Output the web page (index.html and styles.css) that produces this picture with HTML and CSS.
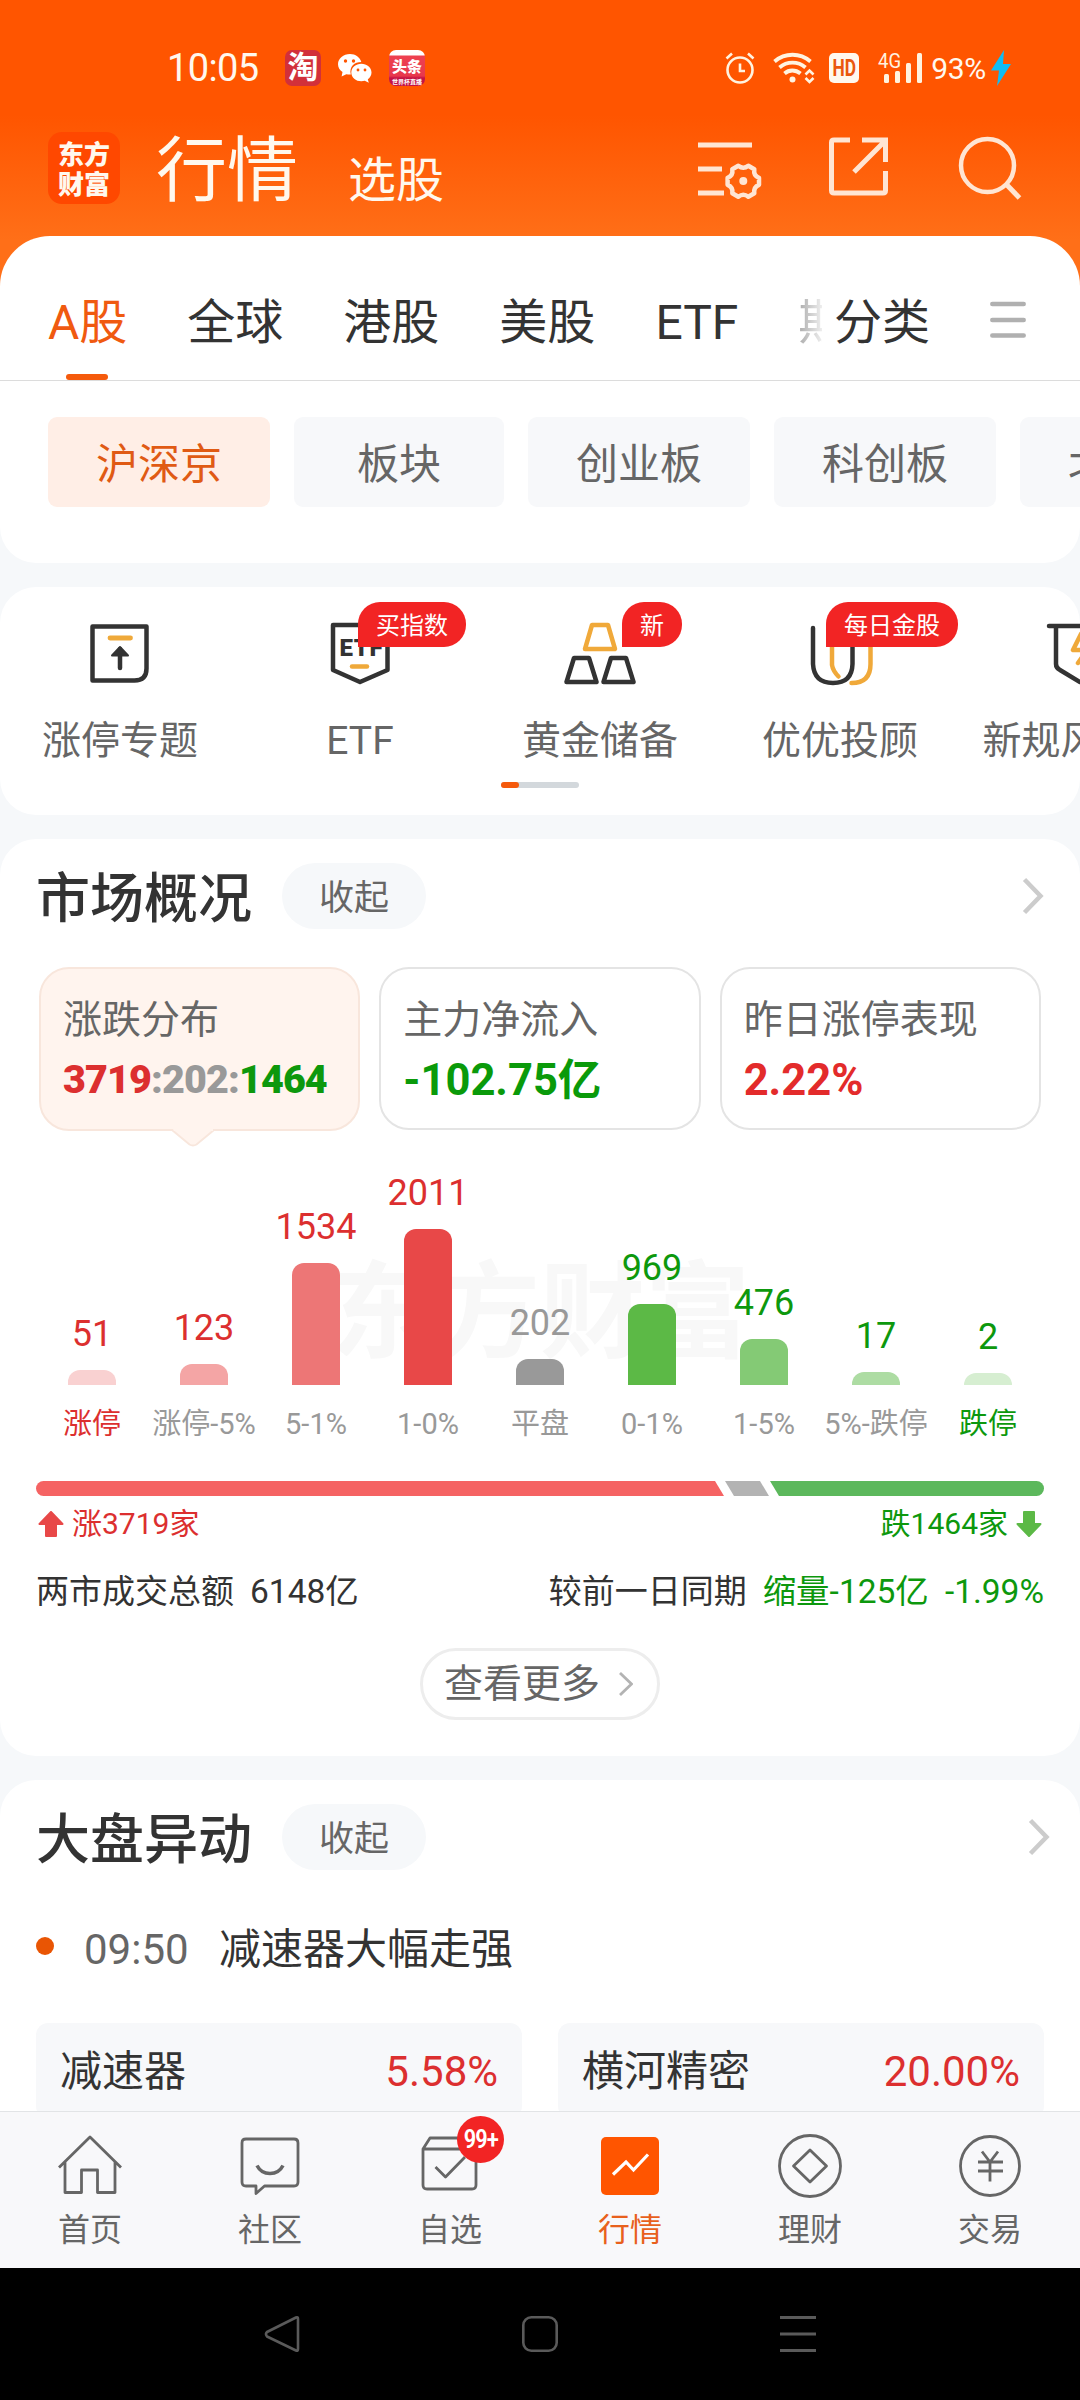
FILE: index.html
```html
<!DOCTYPE html>
<html lang="zh-CN">
<head>
  <meta charset="UTF-8">
  <title>行情</title>
  <meta name="viewport" content="width=device-width, initial-scale=1.0"/>
  <link rel="stylesheet" href="styles.css">
</head>
<body>
  <div class="app">
    <header class="header">
      <div class="status-bar">
        <span class="clock">10:05</span>
        <div class="status-apps">
          <span class="app-tao">淘</span>
          <svg class="app-wechat" width="34" height="30" viewBox="0 0 34 30">
            <path fill="#fff" d="M12 1C5.400 1 0 5.500 0 11.200c0 3.300 1.800 6 4.500 7.900L3.600 23.500l4.700-2.300c1.300.3 2.500.4 3.700.4h.8C11 13.500 16.500 9 23.300 9 22 4.300 17.500 1 12 1z"/>
            <path fill="#fff" d="M33.500 19.500c0-5-4.700-8.800-10.200-8.800s-10 3.800-10 8.800 4.500 8.800 10 8.800c1.200 0 2.400-.2 3.500-.5l4 2-1-3.500c2.300-1.700 3.700-4 3.700-6.800z"/>
            <g fill="#ff5500"><circle cx="7.500" cy="8" r="1.700"/><circle cx="15.500" cy="8" r="1.700"/><circle cx="20" cy="17" r="1.400"/><circle cx="27" cy="17" r="1.400"/></g>
          </svg>
          <span class="app-toutiao"><b>头条</b><i>世界杯直播</i></span>
        </div>
        <div class="status-right">
          <svg class="alarm" width="30" height="34" viewBox="0 0 30 34" fill="none" stroke="#fff3e0" stroke-width="2.600">
            <circle cx="15" cy="19" r="12.500"/><path d="M15 12.500v7.500h5M1.500 7.500l5.500-5M28.500 7.500L23 2.500" />
          </svg>
          <svg class="wifi" width="42" height="32" viewBox="0 0 42 32" fill="none" stroke="#fff3e0" stroke-width="3.800">
            <path d="M1.500 9.500C12 .5 27 .5 37.500 9.500M6.500 15.500c7.500-6.500 18.500-6.500 26 0M11.500 21.500c4.500-4 11-4 16 0"/>
            <circle cx="19.500" cy="27.500" r="3" fill="#fff3e0" stroke="none"/>
            <path stroke-width="2.600" d="M32.500 22.500l4-4 4 4M32.500 26l4 4 4-4"/>
          </svg>
          <svg class="hd" width="30" height="30" viewBox="0 0 30 30">
            <rect width="30" height="30" rx="5" fill="#fff8ee"/>
            <text x="3.500" y="23.300" textLength="23.500" lengthAdjust="spacingAndGlyphs">HD</text>
          </svg>
          <svg class="signal" width="46" height="32" viewBox="0 0 46 32" fill="#fff3e0">
            <text x="1" y="16" font-size="20" textLength="23" lengthAdjust="spacingAndGlyphs">4G</text>
            <rect x="7" y="22" width="5" height="9" rx="1.500"/><rect x="18" y="19" width="5" height="12" rx="1.500"/>
            <rect x="29" y="11" width="5" height="20" rx="1.500"/><rect x="40" y="1" width="5" height="30" rx="1.500"/>
          </svg>
          <span class="battery">93%</span>
          <svg class="bolt" width="20" height="36" viewBox="0 0 20 36"><path fill="#10bdf5" d="M13 0L0 20.500h8L6 36 20 14h-8z"/></svg>
        </div>
      </div>
      <div class="title-bar">
        <div class="logo"><span>东方</span><span>财富</span></div>
        <h1>行情</h1>
        <span class="sub-title">选股</span>
        <div class="title-icons">
          <svg width="64" height="64" viewBox="0 0 64 64" fill="none" stroke="#ffe5d3" stroke-width="5">
            <path d="M0 9h54M0 33h24M0 57h26"/>
            <path stroke-width="4.500" stroke-linejoin="round" d="M40.300 29.800q5 4 10 0l6 3.500q-1 6.200 4.700 8.500v7q-5.700 2.300-4.700 8.500l-6 3.500q-5-4-10 0l-6-3.500q1-6.200-4.700-8.500v-7q5.700-2.300 4.700-8.500z"/>
            <circle cx="45.300" cy="45" r="4" fill="#ffe5d3" stroke="none"/>
          </svg>
          <svg width="60" height="60" viewBox="0 0 60 60" fill="none" stroke="#ffe5d3" stroke-width="5">
            <path d="M22 4H6Q3.500 4 3.500 6.500v48Q3.500 57 6 57h49q2.500 0 2.500-2.500V35M34 4h23.500v22M57 5L26 36"/>
          </svg>
          <svg width="64" height="64" viewBox="0 0 64 64" fill="none" stroke="#ffe5d3" stroke-width="4.500">
            <circle cx="29.500" cy="29.500" r="26.500"/><path stroke-width="5" d="M48 48l13.500 14"/>
          </svg>
        </div>
      </div>
    </header>

    <main class="content">
      <section class="card market-card">
        <nav class="tabs">
          <a class="tab active">A股</a>
          <a class="tab">全球</a>
          <a class="tab">港股</a>
          <a class="tab">美股</a>
          <a class="tab">ETF</a>
          <a class="tab faded">期</a>
          <a class="tab last">分类</a>
          <svg class="tab-menu" width="36" height="38" viewBox="0 0 36 38" stroke="#b0b0b0" stroke-width="4.500" stroke-linecap="round"><path d="M2.300 3h31.400M2.300 19h31.400M2.300 34.500h31.400"/></svg>
        </nav>
        <div class="chips">
          <span class="chip active">沪深京</span>
          <span class="chip">板块</span>
          <span class="chip">创业板</span>
          <span class="chip">科创板</span>
          <span class="chip">北交所</span>
        </div>
      </section>

      <section class="card shortcut-card">
        <div class="shortcuts">
          <div class="shortcut">
            <svg width="72" height="66" viewBox="0 0 72 66" fill="none" stroke="#333" stroke-width="4.500" stroke-linejoin="round" stroke-linecap="round">
              <path d="M8.500 5.500h54v42q0 12-12 12h-42z"/>
              <path stroke="#efa93a" stroke-width="4.800" d="M26 17h20.500"/>
              <path d="M36 47V28"/><path fill="#333" stroke-width="2" d="M28 34.500l8-8.500 8 8.500z"/>
            </svg>
            <span>涨停专题</span>
          </div>
          <div class="shortcut">
            <svg width="72" height="66" viewBox="0 0 72 66" fill="none" stroke="#333" stroke-width="4.500" stroke-linejoin="round" stroke-linecap="round">
              <path d="M9 4h54.500v45L36 61 9 49z"/>
              <text class="etf-mark" x="15.500" y="35" textLength="43">ETF</text>
              <path stroke="#efa93a" d="M28 45.500h15"/>
            </svg>
            <span>ETF</span>
            <em class="badge">买指数</em>
          </div>
          <div class="shortcut">
            <svg width="72" height="66" viewBox="0 0 72 66" fill="none" stroke="#333" stroke-width="4.500" stroke-linejoin="round">
              <path stroke="#f0a93a" d="M28 4h16l7 24H21z"/>
              <path d="M10 37h15l7.500 24H2.500zM47 37h15l7.500 24h-30z"/>
            </svg>
            <span>黄金储备</span>
            <em class="badge">新</em>
          </div>
          <div class="shortcut">
            <svg width="72" height="66" viewBox="0 0 72 66" fill="none" stroke="#333" stroke-width="4.500" stroke-linecap="round">
              <path stroke="#f0a93a" d="M28 10v34q1 6 6.500 11.500M66.500 10v33q0 19-19 19"/>
              <path d="M9 7v36q1 19 20 19t19.500-19V7"/>
            </svg>
            <span>优优投顾</span>
            <em class="badge">每日金股</em>
          </div>
          <div class="shortcut">
            <svg width="72" height="66" viewBox="0 0 72 66" fill="none" stroke="#333" stroke-width="4.500" stroke-linejoin="round" stroke-linecap="round">
              <path d="M5 5h62M12 6v37q0 4 4 6l20 12 20-12q4-2 4-6V6"/>
              <path stroke="#efa93a" d="M37 13L29 29h14l-9 13"/>
            </svg>
            <span>新规风向标</span>
          </div>
        </div>
        <div class="scroll-bar"><i></i></div>
      </section>

      <section class="card overview-card">
        <div class="card-head">
          <h2>市场概况</h2>
          <span class="fold">收起</span>
          <svg class="arrow" width="22" height="38" viewBox="0 0 22 38" fill="none" stroke="#ccc" stroke-width="4.500"><path d="M2.500 2.500L18.500 19 2.500 35.500"/></svg>
        </div>
        <div class="stats">
          <div class="stat active">
            <label>涨跌分布</label>
            <p class="ratio"><b class="red">3719</b><b class="gray">:202:</b><b class="green">1464</b></p>
            <svg class="pointer" width="42" height="18" viewBox="0 0 42 18"><path fill="#fff4ee" stroke="#f8e6dc" stroke-width="2" d="M0 1l17.500 14.500q3.500 2 7 0L42 1"/><path fill="#fff4ee" d="M1 0h40v2H2z"/></svg>
          </div>
          <div class="stat">
            <label>主力净流入</label>
            <p class="green">-102.75亿</p>
          </div>
          <div class="stat">
            <label>昨日涨停表现</label>
            <p class="red">2.22%</p>
          </div>
        </div>

        <div class="chart">
          <div class="watermark">东方财富</div>
          <div class="col red"><span>51</span><i class="bar r1" style="height:15px"></i><label>涨停</label></div>
          <div class="col red"><span>123</span><i class="bar r2" style="height:21px"></i><label class="muted">涨停-5%</label></div>
          <div class="col red"><span>1534</span><i class="bar r3" style="height:122px"></i><label class="muted">5-1%</label></div>
          <div class="col red"><span>2011</span><i class="bar r4" style="height:156px"></i><label class="muted">1-0%</label></div>
          <div class="col gray"><span>202</span><i class="bar g0" style="height:26px"></i><label class="muted">平盘</label></div>
          <div class="col green"><span>969</span><i class="bar g4" style="height:81px"></i><label class="muted">0-1%</label></div>
          <div class="col green"><span>476</span><i class="bar g3" style="height:46px"></i><label class="muted">1-5%</label></div>
          <div class="col green"><span>17</span><i class="bar g2" style="height:13px"></i><label class="muted">5%-跌停</label></div>
          <div class="col green"><span>2</span><i class="bar g1" style="height:12px"></i><label>跌停</label></div>
        </div>

        <div class="split-bar">
          <i class="up" style="width:688px"></i><i class="flat" style="width:44px"></i><i class="down"></i>
        </div>
        <div class="split-text">
          <span class="red"><svg width="26" height="26" viewBox="0 0 26 26"><path fill="#e84848" stroke="#e84848" stroke-width="2" stroke-linejoin="round" d="M13 1L1.500 13H8v12h10V13h6.500z"/></svg>涨3719家</span>
          <span class="green">跌1464家<svg width="26" height="26" viewBox="0 0 26 26"><path fill="#5cb946" stroke="#5cb946" stroke-width="2" stroke-linejoin="round" d="M13 25L1.500 13H8V1h10v12h6.500z"/></svg></span>
        </div>
        <div class="turnover">
          <span>两市成交总额</span><span class="num">6148亿</span>
          <span class="push">较前一日同期</span><span class="num green">缩量-125亿</span><span class="num green">-1.99%</span>
        </div>
        <a class="more">查看更多
          <svg width="14" height="24" viewBox="0 0 14 24" fill="none" stroke="#b3b3b3" stroke-width="2.800"><path d="M1 1l11.500 11L1 23"/></svg>
        </a>
      </section>

      <section class="card move-card">
        <div class="card-head">
          <h2>大盘异动</h2>
          <span class="fold">收起</span>
          <svg class="arrow" width="22" height="38" viewBox="0 0 22 38" fill="none" stroke="#ccc" stroke-width="4.500"><path d="M2.500 2.500L18.500 19 2.500 35.500"/></svg>
        </div>
        <div class="event"><i></i><time>09:50</time><span>减速器大幅走强</span></div>
        <div class="stocks">
          <div class="stock"><span>减速器</span><span class="red">5.58%</span></div>
          <div class="stock"><span>横河精密</span><span class="red">20.00%</span></div>
        </div>
      </section>
    </main>

    <nav class="bottom-nav">
      <a class="nav-item">
        <svg width="66" height="66" viewBox="0 0 66 66" fill="none" stroke="#666" stroke-width="2.800" stroke-linejoin="round">
          <path d="M2 34.500L33 4l31 30.500M8 29v30.500h16.500V37h16v22.500H58V29"/>
        </svg>首页</a>
      <a class="nav-item">
        <svg width="66" height="66" viewBox="0 0 66 66" fill="none" stroke="#666" stroke-width="2.800" stroke-linejoin="round">
          <path d="M9 6h48q4 0 4 4v39q0 4-4 4H27.500L19 60.500V53H9q-4 0-4-4V10q0-4 4-4z"/><path stroke-width="3.500" d="M20 32.500q4 8 13 8t13-8"/>
        </svg>社区</a>
      <a class="nav-item">
        <svg width="66" height="66" viewBox="0 0 66 66" fill="none" stroke="#666" stroke-width="2.800" stroke-linejoin="round">
          <path d="M6 16l7-11h40l6 11M6 16h53v36q0 4-4 4H10q-4 0-4-4zM18.500 34l10 10L48 24"/>
        </svg>自选<em>99+</em></a>
      <a class="nav-item active">
        <svg width="66" height="66" viewBox="0 0 66 66" fill="none">
          <rect x="4" y="4" width="58" height="58" rx="5" fill="#ff5500"/><path stroke="#fff" stroke-width="3.200" d="M16 41.500l13-12.500 7.500 8L51 21.500"/>
        </svg>行情</a>
      <a class="nav-item">
        <svg width="66" height="66" viewBox="0 0 66 66" fill="none" stroke="#666" stroke-width="2.800" stroke-linejoin="round">
          <circle cx="33" cy="33" r="30.500"/><path d="M33 17l16.500 16L33 49 16.500 33z"/>
        </svg>理财</a>
      <a class="nav-item">
        <svg width="66" height="66" viewBox="0 0 66 66" fill="none" stroke="#666" stroke-width="2.800">
          <circle cx="33" cy="33" r="29.500"/><path d="M25 18.500l8 10.500 8-10.500M33 29v19.500M21 29h25M21 38h25"/>
        </svg>交易</a>
    </nav>

    <footer class="system-bar">
      <svg width="36" height="38" viewBox="0 0 36 38" fill="none" stroke="#5a5a5a" stroke-width="2.600" stroke-linejoin="round"><path d="M32 2.500Q34 1.500 34 4v30q0 2.500-2 1.500L3 21.500Q1 19 3 17z"/></svg>
      <svg width="36" height="36" viewBox="0 0 36 36" fill="none" stroke="#5a5a5a" stroke-width="2.600"><rect x="1.300" y="1.300" width="33.400" height="33.400" rx="8"/></svg>
      <svg width="36" height="38" viewBox="0 0 36 38" stroke="#5a5a5a" stroke-width="3"><path d="M0 2.500h36M0 19h36M0 35.500h36"/></svg>
    </footer>
  </div>
</body>
</html>
```

FILE: styles.css
```css
* {
  box-sizing: border-box;
}

body {
  margin: 0;
  background: #f6f8fa;
  color: #333;
  font-family: Roboto, "Noto Sans CJK SC", sans-serif;
  -webkit-font-smoothing: antialiased;
}

h1, h2, p {
  margin: 0;
  font-weight: 400;
}

i, em {
  font-style: normal;
}

svg {
  display: block;
  flex: none;
}

.red { color: #dc2f2f; }
.green { color: #0d980d; }
.gray { color: #999; }

.app {
  width: 1080px;
  height: 2400px;
  display: flex;
  flex-direction: column;
  overflow: hidden;
}

/* Header */
.header {
  height: 300px;
  margin-bottom: -64px;
  background: linear-gradient(#ff5500 0, #ff5500 115px, #ff6f18 240px);
  color: #fff8ee;
  flex: none;
}

.status-bar {
  height: 116px;
  padding: 20px 69px 0 167px;
  display: flex;
  align-items: center;
}

.clock {
  width: 118px;
  font-size: 38px;
  letter-spacing: -0.6px;
}

.status-apps {
  display: flex;
  align-items: center;
  gap: 17px;
}

.app-tao, .app-toutiao {
  width: 36px;
  height: 36px;
  border-radius: 7px;
  background: #d2303a;
  color: #fff;
  font-size: 31px;
  font-weight: 700;
  line-height: 35px;
  text-align: center;
}

.app-toutiao {
  background: linear-gradient(#fff 0, #fff 5px, #ee4150 6px, #e8384c 26px, #c41345 28px);
  display: flex;
  flex-direction: column;
}

.app-toutiao b {
  font-size: 15px;
  line-height: 21px;
  padding-top: 7px;
}

.app-toutiao i {
  font-size: 6px;
  line-height: 7px;
}

.status-right {
  margin-left: auto;
  display: flex;
  align-items: center;
}

.wifi { margin-left: 18px; }

.hd {
  margin: 0 18px 0 14px;
  fill: #ea560d;
  font-size: 23px;
  font-weight: 700;
}

.battery {
  margin: 0 5px 0 8px;
  font-size: 30px;
  letter-spacing: -0.3px;
}

.title-bar {
  height: 120px;
  padding: 0 58px 0 48px;
  display: flex;
}

.logo {
  width: 72px;
  height: 72px;
  margin: 16px 36px 0 0;
  padding-top: 6px;
  border-radius: 14px;
  background: #ff4800;
  display: flex;
  flex-direction: column;
  align-items: center;
  font: 900 26px/30px "Noto Sans CJK SC", sans-serif;
}

.title-bar h1 {
  width: 192px;
  font-size: 71px;
  line-height: 110px;
}

.sub-title {
  font-size: 48px;
  line-height: 130px;
}

.title-icons {
  margin: 20px 0 0 auto;
  display: flex;
  gap: 70px;
}

.title-icons svg:first-child {
  margin-right: -4px;
}

/* Cards */
.content {
  flex: 1;
  min-height: 0;
  overflow: hidden;
}

.card {
  margin-bottom: 24px;
  border-radius: 36px;
  background: #fff;
  overflow: hidden;
}

.market-card {
  height: 327px;
  border-radius: 50px 50px 36px 36px;
}

.tabs {
  height: 145px;
  padding: 27px 54px 0 48px;
  border-bottom: 1px solid #dcdcdc;
  display: flex;
  gap: 60px;
  font-size: 48px;
  line-height: 119px;
  white-space: nowrap;
}

.tab.active {
  color: #f05a10;
  position: relative;
}

.tab.active::after {
  content: "";
  position: absolute;
  left: 18px;
  bottom: 0;
  width: 42px;
  height: 6px;
  border-radius: 3px;
  background: #f55a0c;
}

.tab.faded {
  width: 24px;
  margin-right: -48px;
  overflow: hidden;
  color: transparent;
  background: linear-gradient(90deg, #aaa, #eee);
  -webkit-background-clip: text;
  background-clip: text;
}

.tab-menu {
  margin: 38px 0 0 auto;
}

.chips {
  padding: 36px 0 0 48px;
  display: flex;
  gap: 24px;
}

.chip {
  flex: none;
  min-width: 210px;
  height: 90px;
  padding: 0 48px;
  border-radius: 9px;
  background: #f7f8fa;
  color: #666;
  font-size: 42px;
  line-height: 95px;
  text-align: center;
}

.chip.active {
  background: #ffeee6;
  color: #e05a14;
}

.shortcut-card {
  height: 228px;
}

.shortcuts {
  display: flex;
  height: 195px;
}

.shortcut {
  flex: 0 0 240px;
  padding-top: 34px;
  display: flex;
  flex-direction: column;
  align-items: center;
  position: relative;
  color: #666;
  font-size: 39px;
  line-height: 40px;
}

.shortcut span {
  margin-top: 34px;
}

.etf-mark {
  font-size: 24px;
  font-weight: 900;
  fill: #333;
  stroke: none;
}

.badge {
  position: absolute;
  top: 15px;
  left: 118px;
  height: 45px;
  padding: 0 18px;
  border-radius: 22px 22px 22px 0;
  background: #f22424;
  color: #fff;
  font-size: 24px;
  line-height: 48px;
}

.shortcut:nth-child(3) .badge { left: 142px; }
.shortcut:nth-child(4) .badge { left: 106px; }

.scroll-bar {
  width: 78px;
  height: 6px;
  margin: 0 auto;
  border-radius: 3px;
  background: #d3d8dc;
}

.scroll-bar i {
  display: block;
  width: 18px;
  height: 6px;
  border-radius: 3px;
  background: #f55a0c;
}

.overview-card {
  height: 917px;
  padding: 0 36px;
}

.card-head {
  height: 114px;
  display: flex;
  align-items: center;
}

.card-head h2 {
  width: 246px;
  padding-top: 7px;
  font-size: 54px;
  font-weight: 500;
  line-height: 60px;
}

.fold {
  width: 144px;
  height: 66px;
  border-radius: 33px;
  background: #f6f8fa;
  color: #666;
  font-size: 35px;
  line-height: 72px;
  text-align: center;
}

.arrow {
  margin-left: auto;
}

/* Stats */
.stats {
  height: 164px;
  margin: 14px 3px 0;
  display: flex;
  gap: 19px;
}

.stat {
  flex: 1;
  height: 163px;
  padding: 31px 0 0 22px;
  border: 2px solid #e4e4e4;
  border-radius: 30px;
  color: #666;
  position: relative;
}

.stat.active {
  height: 164px;
  background: #fff4ee;
  border-color: #f8e6dc;
}

.stat label {
  display: block;
  font-size: 39px;
  line-height: 40px;
}

.stat p {
  margin-top: 17px;
  font-size: 43.500px;
  font-weight: 700;
  line-height: 48px;
  white-space: nowrap;
}

.stat .ratio {
  margin-top: 16px;
  font-size: 39.500px;
  letter-spacing: -0.9px;
}

.stat p.red { color: #e32b2b; }
.stat p.green { color: #0a9a0a; }

.pointer {
  position: absolute;
  left: 131px;
  top: 160px;
}

/* Chart */
.chart {
  height: 309px;
  display: flex;
  position: relative;
}

.watermark {
  position: absolute;
  left: 294px;
  top: 120px;
  color: #f8f8f8;
  font-size: 105px;
  font-weight: 700;
  line-height: 125px;
}

.col {
  flex: 0 0 112px;
  display: flex;
  flex-direction: column;
  justify-content: flex-end;
  align-items: center;
  position: relative;
  font-size: 36px;
  line-height: 40px;
}

.bar {
  width: 48px;
  margin-top: 16px;
  border-radius: 12px 12px 0 0;
}

.r1 { background: #f9d1d1; }
.r2 { background: #f4a5a5; }
.r3 { background: #ed7676; }
.r4 { background: #e84848; }
.g0 { background: #999; }
.g4 { background: #5cb946; }
.g3 { background: #84ca75; }
.g2 { background: #addca3; }
.g1 { background: #d6eed1; }

.col label {
  height: 55px;
  font-size: 29px;
  line-height: 78px;
  white-space: nowrap;
}

.col .muted {
  color: #999;
}

.split-bar {
  height: 15px;
  margin-top: 41px;
  border-radius: 8px;
  overflow: hidden;
  display: flex;
  gap: 1px;
}

.split-bar .up {
  background: #f56363;
  clip-path: polygon(0 0, calc(100% - 9px) 0, 100% 100%, 0 100%);
}

.split-bar .flat {
  background: #b3b3b3;
  clip-path: polygon(0 0, calc(100% - 9px) 0, 100% 100%, 9px 100%);
}

.split-bar .down {
  flex: 1;
  background: #5cb85c;
  clip-path: polygon(0 0, 100% 0, 100% 100%, 9px 100%);
}

.split-text {
  height: 56px;
  display: flex;
  justify-content: space-between;
  align-items: center;
  font-size: 30px;
  line-height: 56px;
}

.split-text span {
  display: flex;
  align-items: center;
  gap: 8px;
  padding: 0 2px;
}

.turnover {
  height: 80px;
  display: flex;
  gap: 16px;
  font-size: 33px;
  line-height: 80px;
}

.turnover .num {
  font-size: 33.500px;
}

.push {
  margin-left: auto;
}

.more {
  width: 240px;
  height: 72px;
  margin: 16px auto 0;
  padding-right: 3px;
  border: 3px solid #ededed;
  border-radius: 36px;
  display: flex;
  align-items: center;
  justify-content: center;
  gap: 19px;
  color: #666;
  font-size: 39px;
  line-height: 68px;
}

/* Market moves */
.move-card {
  height: 500px;
  padding: 0 36px;
}

.move-card .arrow {
  margin-right: -6px;
}

.event {
  height: 102px;
  display: flex;
  font-size: 42px;
  line-height: 111px;
}

.event i {
  width: 18px;
  height: 18px;
  margin-top: 43px;
  border-radius: 50%;
  background: #e95504;
}

.event time {
  width: 135px;
  margin-left: 30px;
  color: #666;
}

.stocks {
  margin-top: 27px;
  display: flex;
  gap: 36px;
}

.stock {
  flex: 1;
  height: 95px;
  padding: 0 24px;
  border-radius: 12px;
  background: #f7f8fa;
  display: flex;
  justify-content: space-between;
  font-size: 42px;
  line-height: 98px;
}

/* Bottom nav */
.bottom-nav {
  height: 157px;
  flex: none;
  border-top: 1px solid #e2e4e6;
  background: #f8f8fa;
  display: flex;
}

.nav-item {
  flex: 1;
  padding-top: 21px;
  display: flex;
  flex-direction: column;
  align-items: center;
  gap: 11px;
  position: relative;
  color: #666;
  font-size: 32px;
  line-height: 40px;
}

.nav-item.active {
  color: #e8601c;
}

.nav-item em {
  position: absolute;
  left: 97px;
  top: 4px;
  width: 47px;
  height: 47px;
  border-radius: 50%;
  background: #f22424;
  color: #fff;
  font: 500 26px/47px "Roboto Condensed", Roboto, sans-serif;
  letter-spacing: -1.500px;
  text-align: center;
}

.system-bar {
  height: 132px;
  flex: none;
  background: #000;
  display: flex;
  justify-content: center;
  align-items: center;
  gap: 222px;
}
```
